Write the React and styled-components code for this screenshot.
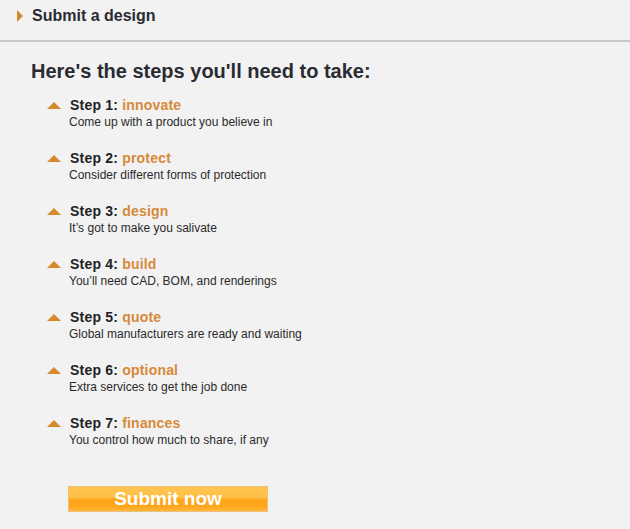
import React from "react";
import styled, { createGlobalStyle } from "styled-components";

const Global = createGlobalStyle`
  html, body { margin: 0; padding: 0; background: #f2f2f2; }
  body { font-family: "Liberation Sans", Arial, sans-serif; }
`;

const Page = styled.div`
  width: 630px;
  min-height: 529px;
  background: #f2f2f2;
`;

const Header = styled.div`
  display: flex;
  align-items: flex-start;
  gap: 9px;
  height: 33px;
  padding: 7px 0 0 17px;
  border-bottom: 2px solid #c9c9c9;
  font-size: 16px;
  line-height: 18px;
  font-weight: bold;
  color: #2b2b33;
`;

const RightTri = styled.span`
  margin-top: 3px;
  width: 0;
  height: 0;
  border-top: 6px solid transparent;
  border-bottom: 6px solid transparent;
  border-left: 6px solid #d58a2e;
`;

const Content = styled.div`
  padding: 17px 0 0 31px;
`;

const Title = styled.h2`
  margin: 0;
  font-size: 20px;
  line-height: 24px;
  font-weight: bold;
  color: #2b2b33;
`;

const Steps = styled.ul`
  list-style: none;
  margin: 14px 0 0 0;
  padding: 0 0 0 16px;
  display: flex;
  flex-direction: column;
  gap: 19px;
`;

const Step = styled.li`
  display: grid;
  grid-template-columns: 14px 1fr;
  column-gap: 9px;
`;

const UpTri = styled.span`
  margin-top: 5px;
  width: 0;
  height: 0;
  border-left: 7px solid transparent;
  border-right: 7px solid transparent;
  border-bottom: 7px solid #d58a2e;
`;

const StepBody = styled.div`
  display: flex;
  flex-direction: column;
`;

const StepTitle = styled.div`
  font-size: 14px;
  line-height: 17px;
  font-weight: bold;
  letter-spacing: 0.2px;
  color: #222226;
`;

const Accent = styled.span`
  color: #d7893a;
`;

const Desc = styled.div`
  margin-left: -1px;
  font-size: 12px;
  line-height: 17px;
  color: #2a2a2a;
`;

const ButtonRow = styled.div`
  padding: 37px 0 0 37px;
`;

const SubmitButton = styled.button`
  width: 200px;
  height: 26px;
  padding: 0;
  border: 1px solid #ecc27a;
  background: linear-gradient(
    to bottom,
    #ffc552 0%,
    #ffbf45 45%,
    #ffa71c 50%,
    #ffa51a 80%,
    #ffb63e 100%
  );
  color: #ffffff;
  font-family: "Liberation Sans", Arial, sans-serif;
  font-size: 19px;
  font-weight: bold;
  line-height: 24px;
  cursor: pointer;
`;

const steps = [
  ["Step 1:", "innovate", "Come up with a product you believe in"],
  ["Step 2:", "protect", "Consider different forms of protection"],
  ["Step 3:", "design", "It\u2019s got to make you salivate"],
  ["Step 4:", "build", "You\u2019ll need CAD, BOM, and renderings"],
  ["Step 5:", "quote", "Global manufacturers are ready and waiting"],
  ["Step 6:", "optional", "Extra services to get the job done"],
  ["Step 7:", "finances", "You control how much to share, if any"],
];

export default function App() {
  return (
    <Page>
      <Global />
      <Header>
        <RightTri />
        <span>Submit a design</span>
      </Header>
      <Content>
        <Title>Here's the steps you'll need to take:</Title>
        <Steps>
          {steps.map(([a, b, c]) => (
            <Step key={a}>
              <UpTri />
              <StepBody>
                <StepTitle>
                  {a} <Accent>{b}</Accent>
                </StepTitle>
                <Desc>{c}</Desc>
              </StepBody>
            </Step>
          ))}
        </Steps>
        <ButtonRow>
          <SubmitButton>Submit now</SubmitButton>
        </ButtonRow>
      </Content>
    </Page>
  );
}
